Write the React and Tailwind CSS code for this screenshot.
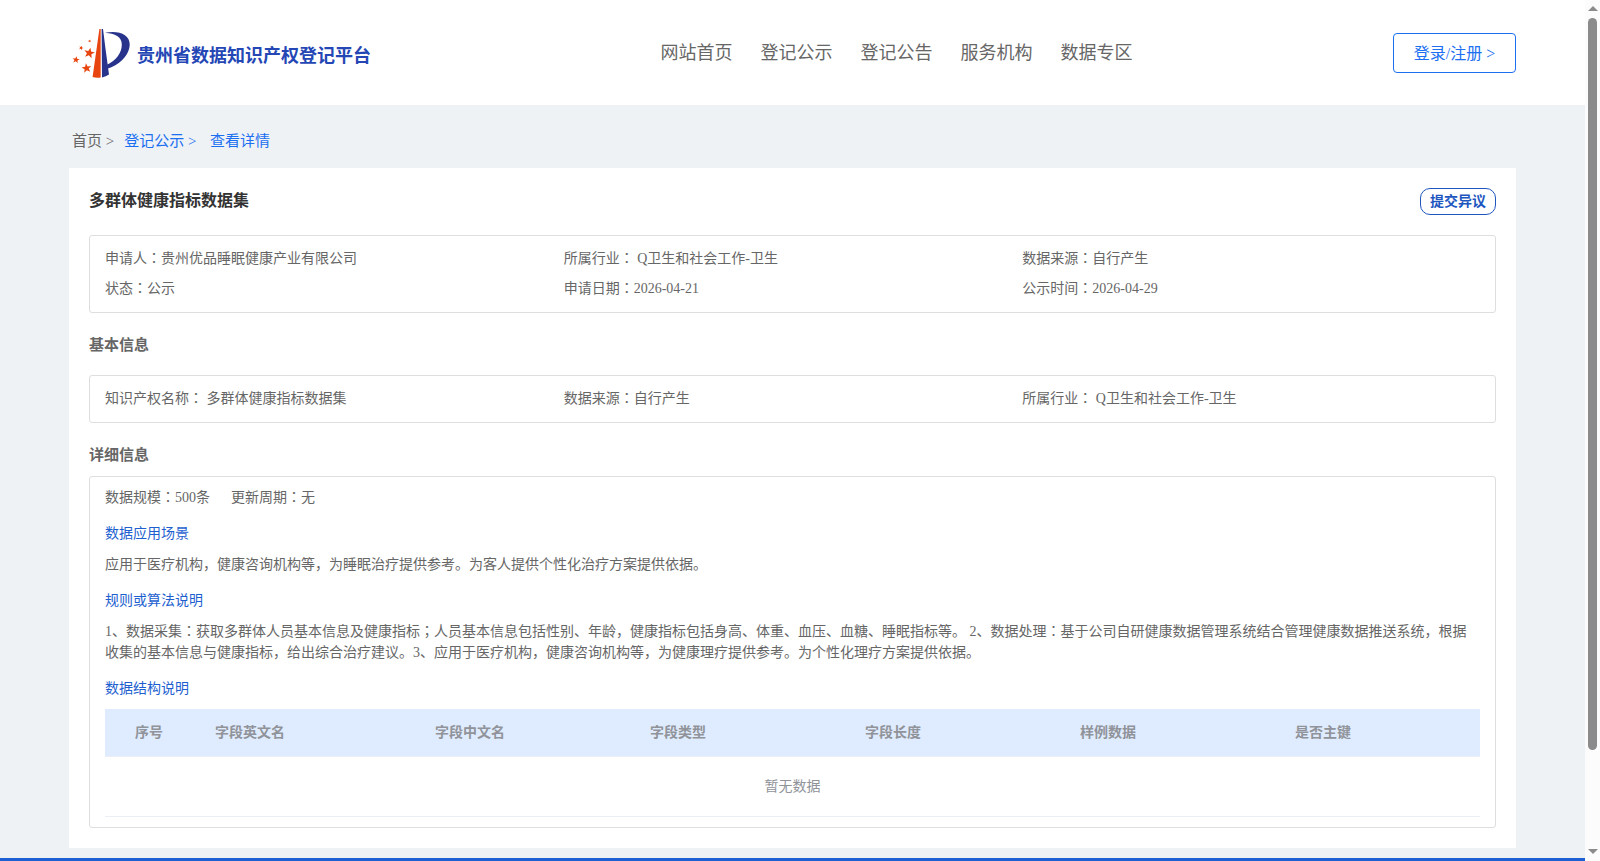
const navItems = ["网站首页", "登记公示", "登记公告", "服务机构", "数据专区"];

const summary = [
  "申请人：贵州优品睡眠健康产业有限公司",
  "所属行业： Q卫生和社会工作-卫生",
  "数据来源：自行产生",
  "状态：公示",
  "申请日期：2026-04-21",
  "公示时间：2026-04-29",
];

const basicInfo = [
  "知识产权名称： 多群体健康指标数据集",
  "数据来源：自行产生",
  "所属行业： Q卫生和社会工作-卫生",
];

const fieldColumns = ["字段中文名", "字段类型", "字段长度", "样例数据"];

// colons and semicolons sit in the middle of their cell
function Text({ children }) {
  return children.split(/([：；])/).map((part, i) =>
    part === "：" || part === "；" ? (
      <span key={i} className="font-['Noto_Sans_CJK_TC',sans-serif] leading-none">{part}</span>
    ) : (
      part
    )
  );
}

function Logo() {
  const star = "M0-5 1.3-1.6 5-1.5 2.1 .7 3.1 4.2 0 2.1-3.1 4.2-2.1 .7-5-1.5-1.3-1.6Z";
  return (
    <svg className="h-[52px] w-[60px]" viewBox="0 0 60 52">
      <g fill="#e8440f">
        <path d="M27.4 1H28.7V49.4Q24.5 50 20.6 49.1Z" />
        <path d={star} transform="translate(17.3 25) rotate(12) scale(1.08)" />
        <path d={star} transform="translate(4 31.7) rotate(8) scale(.72)" />
        <path d={star} transform="translate(14.6 40.2) rotate(-8) scale(.98)" />
        <path d={star} transform="translate(9.2 19.9) rotate(20) scale(.46)" />
        <path d={star} transform="translate(17.7 13) rotate(20) scale(.32)" />
      </g>
      <g fill="#28348c">
        <path d="M29.6 1H31L33.4 20 37 46.5Q34 48.6 30 49.4Z" />
        <path d="M33 4.8C47 2.2 57.7 6.7 57.7 16.2C57.7 28 46 37.5 35.5 40.5L35 36.8C44 32.5 49.8 25 49.8 16.7C49.8 8.7 43 5.5 33 4.8Z" />
      </g>
    </svg>
  );
}

function Header() {
  return (
    <header className="flex h-[105px] bg-white pr-[69px] pl-[72px]">
      <div className="flex w-[588.5px] pt-[28px]">
        <Logo />
        <span className="ml-[5px] text-[18px] leading-[56px] font-bold text-[#2447b5]">
          贵州省数据知识产权登记平台
        </span>
      </div>
      <nav className="flex gap-7 pt-10 text-[18px] leading-[26px] text-[#666]">
        {navItems.map((item) => (
          <a key={item}>{item}</a>
        ))}
      </nav>
      <button className="mt-[33px] ml-auto h-10 w-[123px] rounded border border-[#1b6ff0] pt-[2px] text-[16px] text-[#1b6ff0]">
        登录/注册 &gt;
      </button>
    </header>
  );
}

function InfoBox({ items }) {
  return (
    <div className="grid grid-cols-3 rounded-[3px] border border-[#dcdee0] py-2 pr-[14px] pl-[15px] text-[14px] leading-[30px]">
      {items.map((item) => (
        <div key={item} className="h-[30px]"><Text>{item}</Text></div>
      ))}
    </div>
  );
}

function FieldTable() {
  return (
    <table className="w-full table-fixed border-separate border-spacing-0 text-left text-[14px] text-[#909399]">
      <colgroup>
        <col className="w-[100px]" />
        <col className="w-[220px]" />
        <col className="w-[215px]" />
        <col className="w-[215px]" />
        <col className="w-[215px]" />
        <col className="w-[215px]" />
        <col />
      </colgroup>
      <thead>
        <tr className="h-12 bg-[#dfecff] *:border-b *:border-[#ebeef5]">
          <th className="pl-[30px]">序号</th>
          <th className="pl-[10px]">字段英文名</th>
          {fieldColumns.map((name) => (
            <th key={name} className="pl-[10px]">{name}</th>
          ))}
          <th className="pl-[10px]">是否主键</th>
        </tr>
      </thead>
      <tbody>
        <tr className="h-[60px]">
          <td colSpan={7} className="border-b border-[#ebeef5] text-center">暂无数据</td>
        </tr>
      </tbody>
    </table>
  );
}

function DetailBox() {
  return (
    <div className="h-[352px] rounded-[3px] border border-[#dcdee0] px-[15px] pt-[10px] text-[14px] leading-[21px]">
      <p className="flex gap-[21px]">
        <span><Text>数据规模：500条</Text></span>
        <span><Text>更新周期：无</Text></span>
      </p>
      <h3 className="mt-[15px] text-[#1e5fd0]">数据应用场景</h3>
      <p className="mt-[10px]">
        应用于医疗机构，健康咨询机构等，为睡眠治疗提供参考。为客人提供个性化治疗方案提供依据。
      </p>
      <h3 className="mt-[15px] text-[#1e5fd0]">规则或算法说明</h3>
      <p className="mt-[10px]">
        <Text>1、数据采集：获取多群体人员基本信息及健康指标；人员基本信息包括性别、年龄，健康指标包括身高、体重、血压、血糖、睡眠指标等。 2、数据处理：基于公司自研健康数据管理系统结合管理健康数据推送系统，根据收集的基本信息与健康指标，给出综合治疗建议。3、应用于医疗机构，健康咨询机构等，为健康理疗提供参考。为个性化理疗方案提供依据。</Text>
      </p>
      <h3 className="mt-[15px] mb-[10px] text-[#1e5fd0]">数据结构说明</h3>
      <FieldTable />
    </div>
  );
}

function Scrollbar() {
  return (
    <div className="flex w-[15px] flex-col items-center bg-[#fcfcfc]">
      <svg className="mt-[6px] h-[5px] w-[10px]" viewBox="0 0 10 5">
        <path d="M5 0 10 5H0Z" fill="#8b8b8b" />
      </svg>
      <div className="mt-[7px] h-[732px] w-[9px] rounded-full bg-[#8b8b8b]" />
      <svg className="mt-auto mb-[7px] h-[5px] w-[10px]" viewBox="0 0 10 5">
        <path d="M0 0H10L5 5Z" fill="#8b8b8b" />
      </svg>
    </div>
  );
}

export default function App() {
  return (
    <div className="flex h-[861px] overflow-hidden font-['Liberation_Serif','Noto_Sans_CJK_SC',serif] text-[#666]">
      <div className="flex flex-1 flex-col bg-[#eef2f5]">
        <Header />
        <div className="flex h-[63px] pt-[25px] pl-[72px] text-[15px] leading-[22px]">
          <span>首页 &gt;</span>
          <span className="ml-[10px] text-[#1b6ff0]">登记公示 &gt;</span>
          <span className="ml-[13.5px] text-[#1b6ff0]">查看详情</span>
        </div>
        <main className="mx-[69px] h-[680px] bg-white px-5 pt-5">
          <div className="flex h-[47px] justify-between">
            <h1 className="text-[16px] leading-[26px] font-bold text-[#333]">多群体健康指标数据集</h1>
            <button className="h-[27px] w-[76px] rounded-[10px] border border-[#1e56bf] text-[14px] font-bold text-[#1e56bf]">
              提交异议
            </button>
          </div>
          <InfoBox items={summary} />
          <h2 className="h-[62px] pt-5 text-[15px] leading-[24px] font-bold">基本信息</h2>
          <InfoBox items={basicInfo} />
          <h2 className="h-[53px] pt-5 text-[15px] leading-[24px] font-bold">详细信息</h2>
          <DetailBox />
        </main>
        <footer className="mt-[10px] h-[3px] bg-[#1c60d4]" />
      </div>
      <Scrollbar />
    </div>
  );
}
